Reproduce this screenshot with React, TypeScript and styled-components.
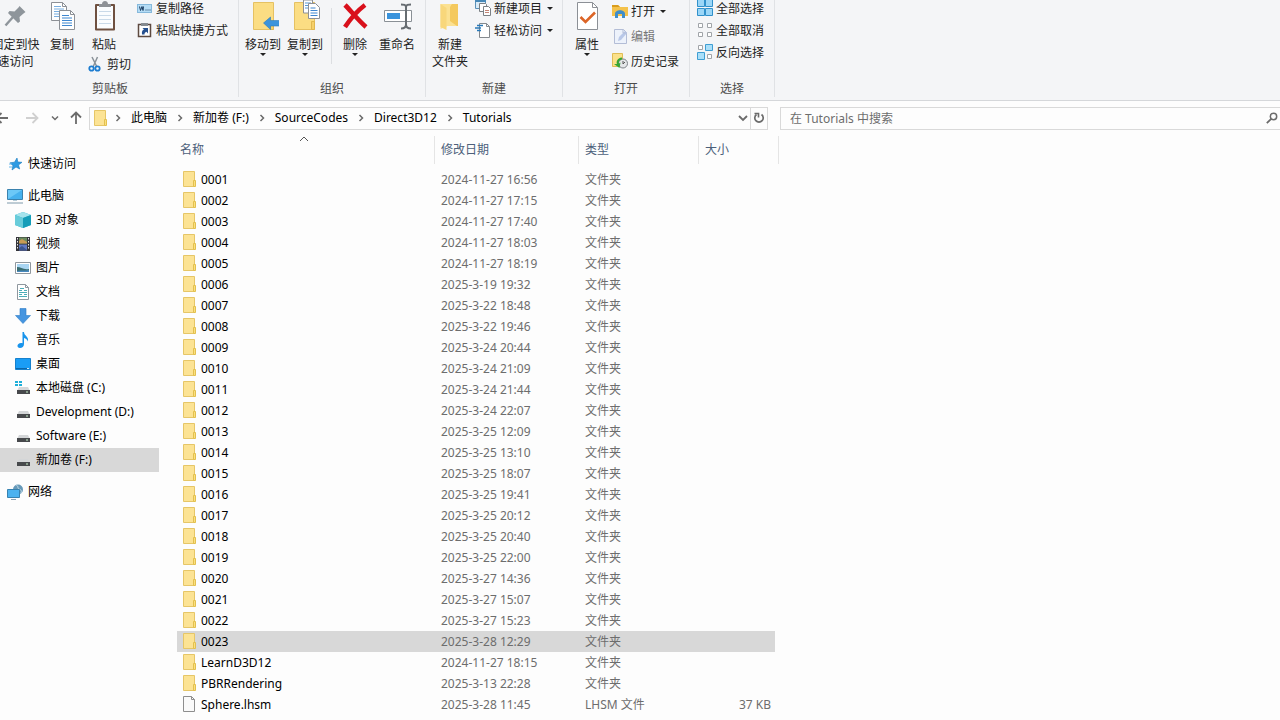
import React from "react";
import styled, { createGlobalStyle, css } from "styled-components";

const GlobalStyle = createGlobalStyle`
  * { box-sizing: border-box; }
  html, body { margin: 0; padding: 0; }
  body {
    background: #fdfdfd;
    color: #000;
    font: 12px/17px "Noto Sans", "Noto Sans CJK SC", sans-serif;
    overflow: hidden;
  }
  button, input { font: inherit; color: inherit; }
  svg { display: block; flex: none; }
`;

const Page = styled.div`
  min-height: 100vh;
  display: flex;
  flex-direction: column;
  overflow: hidden;
`;

/* ---------- Ribbon ---------- */

const Ribbon = styled.header`
  display: flex;
  height: 101px;
  background: #f4f5f7;
  border-bottom: 1px solid #d5d7da;
  color: #222;
  overflow: hidden;
`;

const Group = styled.section<{ $width: number; $first?: boolean }>`
  flex: none;
  width: ${(p) => p.$width}px;
  margin-left: ${(p) => (p.$first ? "-18px" : "0")};
  padding-left: ${(p) => (p.$first ? "9px" : "3px")};
  height: 97px;
  display: flex;
  flex-direction: column;
  border-right: 1px solid #e0e2e5;
`;

const GroupBody = styled.div`
  flex: 1;
  display: flex;
  align-items: flex-start;
  min-height: 0;
`;

const GroupTitle = styled.h2<{ $first?: boolean }>`
  margin: 0;
  margin-left: ${(p) => (p.$first ? "-9px" : "-3px")};
  height: 17px;
  font-size: 12px;
  font-weight: 400;
  line-height: 17px;
  text-align: center;
  color: #4c4c4c;
`;

const bare = css`
  border: 0;
  padding: 0;
  margin: 0;
  background: none;
  white-space: nowrap;
`;

const BigButton = styled.button<{ $width?: number }>`
  ${bare}
  width: ${(p) => p.$width ?? 42}px;
  display: flex;
  flex-direction: column;
  align-items: center;
  line-height: 17px;
`;

const BigLabel = styled.span`
  margin-top: 3px;
`;

const BigArrow = styled.span`
  border: 3px solid transparent;
  border-top-color: #222;
  border-bottom: 0;
`;

const PasteColumn = styled.div`
  width: 53px;
  display: flex;
  flex-direction: column;
  align-items: flex-start;
`;

const SmallColumn = styled.div<{ $gap?: number; $left?: number }>`
  display: flex;
  flex-direction: column;
  align-items: flex-start;
  margin-top: ${(p) => (p.$gap ? 0 : -3)}px;
  margin-left: ${(p) => p.$left ?? 4}px;
  gap: ${(p) => p.$gap ?? 0}px;
`;

const SmallButton = styled.button`
  ${bare}
  height: 22px;
  display: flex;
  align-items: center;
  gap: 3px;
  &:disabled { color: #777; }
`;

const CutButton = styled(SmallButton)`
  margin-left: 4px;
`;

const SmallArrow = styled.span`
  margin-left: 2px;
  border: 3px solid transparent;
  border-top-color: #222;
  border-bottom: 0;
`;

const Divider = styled.span`
  width: 1px;
  height: 56px;
  margin: 8px 2px 0 5px;
  background: #dcdee1;
`;

/* ---------- Navigation bar ---------- */

const NavBar = styled.nav`
  display: flex;
  align-items: center;
  height: 35px;
  padding-bottom: 1px;
`;

const NavButtons = styled.div`
  flex: none;
  width: 89px;
  height: 23px;
  display: flex;
  align-items: center;
  overflow: hidden;
`;

const NavButton = styled.button<{ $width: number }>`
  ${bare}
  flex: none;
  width: ${(p) => p.$width}px;
  height: 23px;
  display: flex;
  align-items: center;
  justify-content: center;
`;

const BackButton = styled(NavButton)`
  margin: 0 8px 0 -8px;
`;

const AddressBar = styled.div`
  flex: 0 1 679px;
  height: 23px;
  display: flex;
  align-items: center;
  border: 1px solid #d9d9d9;
  padding-left: 4px;
`;

const Crumbs = styled.ol`
  flex: 1;
  display: flex;
  list-style: none;
  margin: 0;
  padding: 0 0 0 5px;
`;

const Crumb = styled.li`
  display: flex;
  align-items: center;
  margin-right: 8px;
  gap: 8px;
`;

const CrumbLink = styled.a`
  padding-bottom: 2px;
  color: #000;
  text-decoration: none;
  white-space: nowrap;
`;

const RefreshButton = styled(NavButton)`
  height: 21px;
  border-left: 1px solid #d9d9d9;
`;

const SearchBox = styled.label`
  flex: 1;
  height: 23px;
  margin-left: 12px;
  padding: 0 2px 0 9px;
  display: flex;
  align-items: center;
  border: 1px solid #d9d9d9;
  border-right: 0;
`;

const SearchInput = styled.input`
  flex: 1;
  min-width: 0;
  border: 0;
  outline: 0;
  padding: 0;
  background: none;
  &::placeholder { color: #6d6d6d; opacity: 1; }
`;

/* ---------- Body ---------- */

const Body = styled.main`
  flex: 1;
  display: flex;
  align-items: flex-start;
`;

const Sidebar = styled.aside`
  flex: none;
  width: 159px;
  padding-top: 16px;
  margin-right: 18px;
`;

const TreeGroup = styled.ul`
  list-style: none;
  margin: 0 0 8px;
  padding: 0;
`;

const TreeLink = styled.a<{ $nested?: boolean; $selected?: boolean }>`
  display: flex;
  align-items: center;
  gap: 5px;
  height: 24px;
  padding-left: ${(p) => (p.$nested ? 15 : 7)}px;
  background: ${(p) => (p.$selected ? "#d8d8d8" : "transparent")};
  color: #000;
  text-decoration: none;
  white-space: nowrap;
`;

const TreeLabel = styled.span`
  padding-bottom: 2px;
`;

const FileTable = styled.table`
  width: 602px;
  table-layout: fixed;
  border-collapse: separate;
  border-spacing: 0;
`;

const HeadCell = styled.th`
  position: relative;
  height: 33px;
  padding: 0;
  vertical-align: top;
  text-align: left;
  font-weight: 400;
  color: #4c607a;
`;

const HeadLabel = styled.div<{ $first?: boolean }>`
  height: 28px;
  padding-left: ${(p) => (p.$first ? 3 : 6)}px;
  line-height: 28px;
  border-right: 1px solid #e5e5e5;
`;

const SortMark = styled.span`
  position: absolute;
  top: -1px;
  left: calc(50% - 7px);
`;

const Row = styled.tr<{ $selected?: boolean }>`
  > td { background-color: ${(p) => (p.$selected ? "#d8d8d8" : "transparent")}; }
`;

const Cell = styled.td`
  height: 21px;
  padding: 0 0 0 6px;
  color: #6d6d6d;
  white-space: nowrap;
`;

const SizeCell = styled(Cell)`
  padding-right: 4px;
  text-align: right;
  border-right: 4px solid transparent;
  background-clip: padding-box;
`;

const FileName = styled.div`
  display: flex;
  align-items: center;
  gap: 4px;
  color: #000;
`;

/* ---------- Icons ---------- */

const Big = ({ children }: { children?: React.ReactNode }) => (
  <svg width="32" height="33" viewBox="0 0 32 33" fill="none">{children}</svg>
);
const Small = ({ children }: { children?: React.ReactNode }) => (
  <svg width="16" height="16" viewBox="0 0 16 16" fill="none">{children}</svg>
);

const PinIcon = () => (
  <Big>
    <path d="M19.500 6l6 6-2 1.500-4 3.500.500 4.500-2 1.500L8 13l1.500-2 5 .500 4-4z" fill="#8e959b" />
    <path d="M13 17l-7.500 8.500" stroke="#8e959b" strokeWidth="2.400" />
  </Big>
);
const CopyIcon = () => (
  <Big>
    <path d="M5.500 2.500h11l4 4v14h-15z" fill="#fff" stroke="#8c9096" />
    <path d="M16.500 2.500v4h4" stroke="#8c9096" />
    <path d="M8 6.500h7M8 9h10M8 11.500h5M8 14h5M8 16.500h5" stroke="#79aee0" />
    <path d="M13.500 10.500h11l4 4v15h-15z" fill="#fff" stroke="#8c9096" />
    <path d="M24.500 10.500v4h4" stroke="#8c9096" />
    <path d="M16 15.500h7M16 18h10M16 20.500h10M16 23h10M16 25.500h10" stroke="#3f87d0" strokeWidth="1.200" />
  </Big>
);
const PasteIcon = () => (
  <Big>
    <rect x="7" y="4" width="20" height="26.500" rx="1" fill="#6e5040" />
    <path d="M9 6h16v22.500H9z" fill="#fafcfe" />
    <path d="M11 11.500h12M11 15.500h12M11 19.500h12M11 23.500h12" stroke="#c9d9e8" />
    <path d="M11 7V4h3c0-4 6-4 6 0h3v3z" fill="#8d9196" />
  </Big>
);
const CutIcon = () => (
  <Small>
    <path d="M4 1l5 10M9.500 1L5 11" stroke="#8a9299" strokeWidth="1.500" />
    <circle cx="3.500" cy="12.500" r="2.200" stroke="#1c7cd0" strokeWidth="1.800" />
    <circle cx="9.500" cy="12.500" r="2.200" stroke="#1c7cd0" strokeWidth="1.800" />
  </Small>
);
const PathIcon = () => (
  <Small>
    <rect x=".5" y="4.500" width="14" height="8" fill="#b5dcf5" stroke="#86b9dc" />
    <path d="M2.500 6.500l1 4 1.500-4 1 4 .5-4M8.500 10h1M10.500 10h1M12.500 10h1" stroke="#1b3d63" />
  </Small>
);
const ShortcutIcon = () => (
  <Small>
    <path d="M1.500 2.500h12v12h-12z" fill="#fff" stroke="#5d4a40" strokeWidth="1.500" />
    <path d="M4 1h7v3H4z" fill="#858a90" />
    <path d="M5 12.500c-.5-3 .500-4.500 2-5L5.500 6H11v5.500L9.500 9.800C8 10.200 7.500 11 7.500 12.500z" fill="#26508f" />
  </Small>
);
const BigFolder = () => (
  <>
    <path d="M6.500 2.500h20v27h-20z" fill="#fbdd83" stroke="#e5c163" />
    <path d="M23.500 21.500h3v8h-3z" fill="#f6d06a" stroke="#e0b750" />
  </>
);
const MoveIcon = () => (
  <Big>
    <BigFolder />
    <path d="M16.500 23l7-6v3.500h9v5.500h-9v3.500z" fill="#3c94dc" stroke="#2d7ab9" strokeWidth=".6" />
  </Big>
);
const CopyToIcon = () => (
  <Big>
    <g transform="translate(-1 0)"><BigFolder /></g>
    <path d="M14.500 0h9v13h-9z" fill="#fff" stroke="#8c9096" />
    <path d="M16 3h6M16 5.500h5M16 8h5" stroke="#5798d5" />
    <path d="M19.500 3.500h7l4 4v11h-11z" fill="#fff" stroke="#8c9096" />
    <path d="M21.500 8h5M21.500 10.500h7M21.500 13h7M21.500 15.500h7" stroke="#3f87d0" />
  </Big>
);
const DeleteIcon = () => (
  <Big>
    <path d="M6 5c6 6 13 15 21 22M26 5C18 11 12 18 6 27" stroke="#d9101b" strokeWidth="4.600" />
  </Big>
);
const RenameIcon = () => (
  <Big>
    <path d="M3.500 10.500h27v11h-27z" fill="#fff" stroke="#8a9096" />
    <path d="M6 13h13v6H6z" fill="#3993dc" />
    <path d="M20 4.500c3 0 5 0 5 3v17c0 3-2 4-5 4M30 4.500c-3 0-5 0-5 3v17c0 3 2 4 5 4" stroke="#666c71" strokeWidth="2" />
  </Big>
);
const NewFolderIcon = () => (
  <Big>
    <path d="M6.500 4h17v22h-10l-7 3z" fill="#fbe192" />
    <path d="M6.500 4l6 4v22l-6-3z" fill="#f8d77b" />
    <path d="M16 7v14l7 5h1V4h-6z" fill="#f4c95e" />
  </Big>
);
const NewItemIcon = () => (
  <Small>
    <path d="M.5.500h10v8H.500z" fill="#d9ebf8" stroke="#5b91b8" />
    <path d="M0 1h11" stroke="#4688b8" strokeWidth="2" />
    <path d="M4.500 3.500h6l1 1v7h-7z" fill="#fff" stroke="#7b8085" />
    <path d="M8.500 6.500h5l2 2v7h-7z" fill="#fff" stroke="#7b8085" />
    <path d="M10 10.500h4M10 12.500h4" stroke="#c38475" />
  </Small>
);
const EasyAccessIcon = () => (
  <Small>
    <path d="M4.500 1.500h7l3 3v11h-10z" fill="#fff" stroke="#84898e" />
    <path d="M11.500 1.500v3h3" stroke="#84898e" />
    <path d="M2 3.500h6M0 6h6M2 8.500h4" stroke="#2778b8" strokeWidth="1.500" />
  </Small>
);
const PropertiesIcon = () => (
  <Big>
    <path d="M6.500 2.500h15l5 5v22h-20z" fill="#fff" stroke="#8c9096" />
    <path d="M21.500 2.500v5h5" stroke="#8c9096" />
    <path d="M9.500 17l5 5L24 12.500" stroke="#dc6527" strokeWidth="2.600" />
  </Big>
);
const OpenIcon = () => (
  <Small>
    <path d="M0 2h6l2 2h8v9H0z" fill="#f4c24b" />
    <path d="M0 2h6l2 2H0z" fill="#d99c1c" />
    <path d="M3 15v-4c0-5 10-5 10 0v4h-3v-4H6v4z" fill="#3e8dca" />
  </Small>
);
const EditIcon = () => (
  <Small>
    <path d="M2.500 1.500h9l3 3v11h-12z" fill="#edf2fb" stroke="#b3bdd6" />
    <path d="M6 13l1-4 6-6 2 2-6 7z" fill="#b9c8e8" />
    <path d="M11 1.500v3.500h3.500" stroke="#b3bdd6" />
  </Small>
);
const HistoryIcon = () => (
  <Small>
    <path d="M.5.500h10v13H.500z" fill="#fbe18a" stroke="#e0bd55" />
    <circle cx="11" cy="10.500" r="4.500" fill="#e4e6e8" stroke="#7d8388" />
    <path d="M11 8v3l2-2" stroke="#555" />
    <path d="M10 4.500C5 5 4 9 5 11l-3 0 5.500 4 1-5.500-1.500 1C6.500 9 7 7 10 6.500z" fill="#35a535" />
  </Small>
);
const SelectAllIcon = () => (
  <Small>
    <path d="M.5-.500h7v7h-7zM8.500-.500h7v7h-7zM.5 8.500h7v7h-7zM8.500 8.500h7v7h-7z" fill="#9bd6f7" stroke="#3191cb" />
  </Small>
);
const SelectNoneIcon = () => (
  <Small>
    <path d="M1.500 1.500h4v4h-4zM10.500 1.500h4v4h-4zM1.500 10.500h4v4h-4zM10.500 10.500h4v4h-4z" fill="#fff" stroke="#a0a4a8" />
  </Small>
);
const InvertIcon = () => (
  <Small>
    <path d="M1.500 1.500h4v4h-4zM10.500 10.500h4v4h-4z" fill="#fff" stroke="#a0a4a8" />
    <path d="M8.500.500h7v6h-7zM.5 8.500h7v7h-7z" fill="#aadff9" stroke="#3f9ed3" />
  </Small>
);

const FolderIcon = () => (
  <svg width="14" height="17" viewBox="0 0 14 17" fill="none">
    <path d="M.5.500h11v15H.500z" fill="#fce394" stroke="#e6c667" />
    <path d="M10.500 9.500h2v6h-2z" fill="#fbe07f" stroke="#e3c04f" />
  </svg>
);
const FileIcon = () => (
  <svg width="14" height="17" viewBox="0 0 14 17" fill="none">
    <path d="M.5.500h8l3 3v12H.500z" fill="#fafafa" stroke="#8e8e8e" />
    <path d="M8.500.500v3h3" stroke="#8e8e8e" />
  </svg>
);

const StarIcon = () => (
  <Small>
    <path d="M10 2l.8 4 4.200.300-3.500 2.600 1.200 4.100-3.700-2L5 14l.9-4.300L3 6.800l4.500-.600z" fill="#2e9be3" stroke="#1a7cc0" strokeWidth=".6" />
    <path d="M2 8h3M2 11h3" stroke="#6bb8ea" />
  </Small>
);
const PcIcon = () => (
  <Small>
    <path d="M.5 1.500h15v10H.500z" fill="#6cc8f7" stroke="#3b82ae" />
    <path d="M1 11L15 2v9z" fill="#46b1ee" />
    <path d="M0 15h16" stroke="#7f9aab" />
    <path d="M6 12h4v1H6z" fill="#b7cdd9" />
  </Small>
);
const CubeIcon = () => (
  <Small>
    <path d="M8 0l8 3v10l-8 3-8-3V3z" fill="#2fb3cb" />
    <path d="M8 0l8 3-8 3-8-3z" fill="#a5e3ec" />
    <path d="M0 3l8 3v10l-8-3z" fill="#68ccda" />
    <path d="M8 6l8-3v10l-8 3z" fill="#159db8" />
  </Small>
);
const VideoIcon = () => (
  <Small>
    <path d="M1 1h14v14H1z" fill="#35353a" />
    <path d="M4 1.500h8v6H4z" fill="#6c8c5e" />
    <path d="M4 8.500h8v6H4z" fill="#6179c4" />
    <path d="M4 5l3-2 5 3v1.500H4z" fill="#c99b55" />
    <path d="M4 12l3-2 5 4H4z" fill="#3c568f" />
    <path d="M2.500 2v12M13.500 2v12" stroke="#e8e8e8" strokeDasharray="1.500 1.500" />
  </Small>
);
const PictureIcon = () => (
  <Small>
    <path d="M.5 2.500h15v11H.500z" fill="#fff" stroke="#8f979e" />
    <path d="M2 4h12v8H2z" fill="#a9d5f2" />
    <path d="M2 7c4 0 6 3 12 2v3H2z" fill="#3a6d71" />
    <path d="M2 11c5-1 8 0 12-1v2H2z" fill="#4989be" />
  </Small>
);
const DocumentIcon = () => (
  <Small>
    <path d="M2.500.500h8l3 3v12h-11z" fill="#fff" stroke="#8f979e" />
    <path d="M10.500.500v3h3" stroke="#8f979e" />
    <path d="M4 6.500h3M9 6.500h3M4 8.500h8M4 10.500h3M9 10.500h3M4 12.500h8M5 4.500h4" stroke="#4cadb8" />
  </Small>
);
const DownloadIcon = () => (
  <Small>
    <path d="M5 .500h6v7h4.500L8 15.500.500 7.500H5z" fill="#4595e0" stroke="#2e7dc8" strokeWidth=".6" />
  </Small>
);
const MusicIcon = () => (
  <Small>
    <path d="M7.500 0H9c0 4 5 4 4 9.500-.800-2-2-3-4-3.500v6c0 2.500-1.800 4-4 4-3.500 0-3.500-4.500 1-5 .5 0 1 0 1.500.200z" fill="#1894ec" />
  </Small>
);
const DesktopIcon = () => (
  <Small>
    <path d="M.5 2.500h15v11H.500z" fill="#1a9df5" stroke="#1681cd" />
    <path d="M1 12.500h11" stroke="#0c66a8" />
    <path d="M12 12.500h2" stroke="#cbe8fb" />
  </Small>
);
const DriveIcon = ({ system }: { system?: boolean }) => (
  <Small>
    <path d="M4 7h9l2 4H2z" fill="#d4d6d8" />
    <path d="M2 10h13v4H2z" fill="#47494c" />
    <path d="M11 12h2" stroke="#c8f0c8" />
    {system && <path d="M0 1h3v2H0zM4 1h3v2H4zM0 4h3v2H0zM4 4h3v2H4z" fill="#1eafd9" />}
  </Small>
);
const NetworkIcon = () => (
  <Small>
    <circle cx="11" cy="5.500" r="5" fill="#6799b8" />
    <path d="M9 1c3 1 1 3 3 4s3 1 2 4" stroke="#c2dce9" />
    <path d="M.5 5.500h12v8H.500z" fill="#4bb2ef" stroke="#3782b0" />
    <path d="M4 15.500h5" stroke="#8aa2b2" />
  </Small>
);

const Chevron = ({ d, width = 1.5, color = "#6b6b6b" }: { d: string; width?: number; color?: string }) => (
  <svg width="10" height="10" viewBox="0 0 10 10" fill="none">
    <path d={d} stroke={color} strokeWidth={width} />
  </svg>
);
const ArrowIcon = ({ turn, color }: { turn: number; color: string }) => (
  <svg width="14" height="14" viewBox="0 0 14 14" fill="none">
    <path d="M13 7H2M6.500 2L1.500 7l5 5" stroke={color} strokeWidth="1.800" transform={`rotate(${turn} 7 7)`} />
  </svg>
);
const RefreshIcon = () => (
  <svg width="12" height="12" viewBox="0 0 12 12" fill="none">
    <path d="M8.500 2.500a4.200 4.200 0 1 1-5 0" stroke="#6b6b6b" strokeWidth="1.700" />
    <path d="M1.500 1.500h4v4" stroke="#6b6b6b" strokeWidth="1.600" />
  </svg>
);
const SearchIcon = () => (
  <svg width="12" height="12" viewBox="0 0 12 12" fill="none">
    <circle cx="7.500" cy="4.500" r="3.200" stroke="#6b6b6b" strokeWidth="1.500" />
    <path d="M5.200 6.800L.800 11.200" stroke="#6b6b6b" strokeWidth="1.800" />
  </svg>
);

/* ---------- Data ---------- */

const crumbs = ["此电脑", "新加卷 (F:)", "SourceCodes", "Direct3D12", "Tutorials"];

const devices = [
  { name: "3D 对象", icon: <CubeIcon /> },
  { name: "视频", icon: <VideoIcon /> },
  { name: "图片", icon: <PictureIcon /> },
  { name: "文档", icon: <DocumentIcon /> },
  { name: "下载", icon: <DownloadIcon /> },
  { name: "音乐", icon: <MusicIcon /> },
  { name: "桌面", icon: <DesktopIcon /> },
  { name: "本地磁盘 (C:)", icon: <DriveIcon system /> },
  { name: "Development (D:)", icon: <DriveIcon /> },
  { name: "Software (E:)", icon: <DriveIcon /> },
  { name: "新加卷 (F:)", icon: <DriveIcon />, selected: true },
];

const folders: [string, string][] = [
  ["0001", "2024-11-27 16:56"],
  ["0002", "2024-11-27 17:15"],
  ["0003", "2024-11-27 17:40"],
  ["0004", "2024-11-27 18:03"],
  ["0005", "2024-11-27 18:19"],
  ["0006", "2025-3-19 19:32"],
  ["0007", "2025-3-22 18:48"],
  ["0008", "2025-3-22 19:46"],
  ["0009", "2025-3-24 20:44"],
  ["0010", "2025-3-24 21:09"],
  ["0011", "2025-3-24 21:44"],
  ["0012", "2025-3-24 22:07"],
  ["0013", "2025-3-25 12:09"],
  ["0014", "2025-3-25 13:10"],
  ["0015", "2025-3-25 18:07"],
  ["0016", "2025-3-25 19:41"],
  ["0017", "2025-3-25 20:12"],
  ["0018", "2025-3-25 20:40"],
  ["0019", "2025-3-25 22:00"],
  ["0020", "2025-3-27 14:36"],
  ["0021", "2025-3-27 15:07"],
  ["0022", "2025-3-27 15:23"],
  ["0023", "2025-3-28 12:29"],
  ["LearnD3D12", "2024-11-27 18:15"],
  ["PBRRendering", "2025-3-13 22:28"],
];

const files = [
  ...folders.map(([name, date]) => ({ name, date, type: "文件夹", size: "", folder: true })),
  { name: "Sphere.lhsm", date: "2025-3-28 11:45", type: "LHSM 文件", size: "37 KB", folder: false },
];

export default function App() {
  return (
    <Page>
      <GlobalStyle />
      <Ribbon>
        <Group $width={257} $first>
          <GroupBody>
            <BigButton $width={49}>
              <PinIcon />
              <BigLabel>固定到快<br />速访问</BigLabel>
            </BigButton>
            <BigButton $width={44}>
              <CopyIcon />
              <BigLabel>复制</BigLabel>
            </BigButton>
            <PasteColumn>
              <BigButton $width={40}>
                <PasteIcon />
                <BigLabel>粘贴</BigLabel>
              </BigButton>
              <CutButton><CutIcon />剪切</CutButton>
            </PasteColumn>
            <SmallColumn $left={0}>
              <SmallButton><PathIcon />复制路径</SmallButton>
              <SmallButton><ShortcutIcon />粘贴快捷方式</SmallButton>
            </SmallColumn>
          </GroupBody>
          <GroupTitle $first>剪贴板</GroupTitle>
        </Group>

        <Group $width={187}>
          <GroupBody>
            <BigButton><MoveIcon /><BigLabel>移动到</BigLabel><BigArrow /></BigButton>
            <BigButton><CopyToIcon /><BigLabel>复制到</BigLabel><BigArrow /></BigButton>
            <Divider />
            <BigButton><DeleteIcon /><BigLabel>删除</BigLabel><BigArrow /></BigButton>
            <BigButton><RenameIcon /><BigLabel>重命名</BigLabel></BigButton>
          </GroupBody>
          <GroupTitle>组织</GroupTitle>
        </Group>

        <Group $width={137}>
          <GroupBody>
            <BigButton>
              <NewFolderIcon />
              <BigLabel>新建<br />文件夹</BigLabel>
            </BigButton>
            <SmallColumn>
              <SmallButton><NewItemIcon />新建项目<SmallArrow /></SmallButton>
              <SmallButton><EasyAccessIcon />轻松访问<SmallArrow /></SmallButton>
            </SmallColumn>
          </GroupBody>
          <GroupTitle>新建</GroupTitle>
        </Group>

        <Group $width={127}>
          <GroupBody>
            <BigButton><PropertiesIcon /><BigLabel>属性</BigLabel><BigArrow /></BigButton>
            <SmallColumn $gap={3}>
              <SmallButton><OpenIcon />打开<SmallArrow /></SmallButton>
              <SmallButton disabled><EditIcon />编辑</SmallButton>
              <SmallButton><HistoryIcon />历史记录</SmallButton>
            </SmallColumn>
          </GroupBody>
          <GroupTitle>打开</GroupTitle>
        </Group>

        <Group $width={85}>
          <GroupBody>
            <SmallColumn>
              <SmallButton><SelectAllIcon />全部选择</SmallButton>
              <SmallButton><SelectNoneIcon />全部取消</SmallButton>
              <SmallButton><InvertIcon />反向选择</SmallButton>
            </SmallColumn>
          </GroupBody>
          <GroupTitle>选择</GroupTitle>
        </Group>
      </Ribbon>

      <NavBar aria-label="导航">
        <NavButtons>
          <BackButton $width={20} aria-label="后退"><ArrowIcon turn={0} color="#6b6b6b" /></BackButton>
          <NavButton $width={24} aria-label="前进"><ArrowIcon turn={180} color="#d0d0d0" /></NavButton>
          <NavButton $width={22} aria-label="最近位置"><Chevron d="M2 3.500l3 3 3-3" /></NavButton>
          <NavButton $width={20} aria-label="上移"><ArrowIcon turn={90} color="#6b6b6b" /></NavButton>
        </NavButtons>
        <AddressBar>
          <FolderIcon />
          <Crumbs>
            {crumbs.map((c) => (
              <Crumb key={c}>
                <Chevron d="M3.500 2l3 3-3 3" />
                <CrumbLink href="#">{c}</CrumbLink>
              </Crumb>
            ))}
          </Crumbs>
          <NavButton $width={14} aria-label="历史地址"><Chevron d="M1 3l4 4 4-4" width={1.8} /></NavButton>
          <RefreshButton $width={17} aria-label="刷新"><RefreshIcon /></RefreshButton>
        </AddressBar>
        <SearchBox>
          <SearchInput type="text" placeholder="在 Tutorials 中搜索" aria-label="搜索" />
          <SearchIcon />
        </SearchBox>
      </NavBar>

      <Body>
        <Sidebar>
          <TreeGroup>
            <li><TreeLink href="#"><StarIcon /><TreeLabel>快速访问</TreeLabel></TreeLink></li>
          </TreeGroup>
          <TreeGroup>
            <li><TreeLink href="#"><PcIcon /><TreeLabel>此电脑</TreeLabel></TreeLink></li>
            {devices.map((d) => (
              <li key={d.name}>
                <TreeLink href="#" $nested $selected={d.selected}>
                  {d.icon}
                  <TreeLabel>{d.name}</TreeLabel>
                </TreeLink>
              </li>
            ))}
          </TreeGroup>
          <TreeGroup>
            <li><TreeLink href="#"><NetworkIcon /><TreeLabel>网络</TreeLabel></TreeLink></li>
          </TreeGroup>
        </Sidebar>

        <FileTable>
          <colgroup>
            <col width="258" />
            <col width="144" />
            <col width="120" />
            <col width="80" />
          </colgroup>
          <thead>
            <tr>
              <HeadCell>
                <HeadLabel $first>名称</HeadLabel>
                <SortMark><Chevron d="M1 6l4-4 4 4" width={1} color="#555" /></SortMark>
              </HeadCell>
              <HeadCell><HeadLabel>修改日期</HeadLabel></HeadCell>
              <HeadCell><HeadLabel>类型</HeadLabel></HeadCell>
              <HeadCell><HeadLabel>大小</HeadLabel></HeadCell>
            </tr>
          </thead>
          <tbody>
            {files.map((f) => (
              <Row key={f.name} $selected={f.name === "0023"}>
                <Cell>
                  <FileName>{f.folder ? <FolderIcon /> : <FileIcon />}{f.name}</FileName>
                </Cell>
                <Cell>{f.date}</Cell>
                <Cell>{f.type}</Cell>
                <SizeCell>{f.size}</SizeCell>
              </Row>
            ))}
          </tbody>
        </FileTable>
      </Body>
    </Page>
  );
}
